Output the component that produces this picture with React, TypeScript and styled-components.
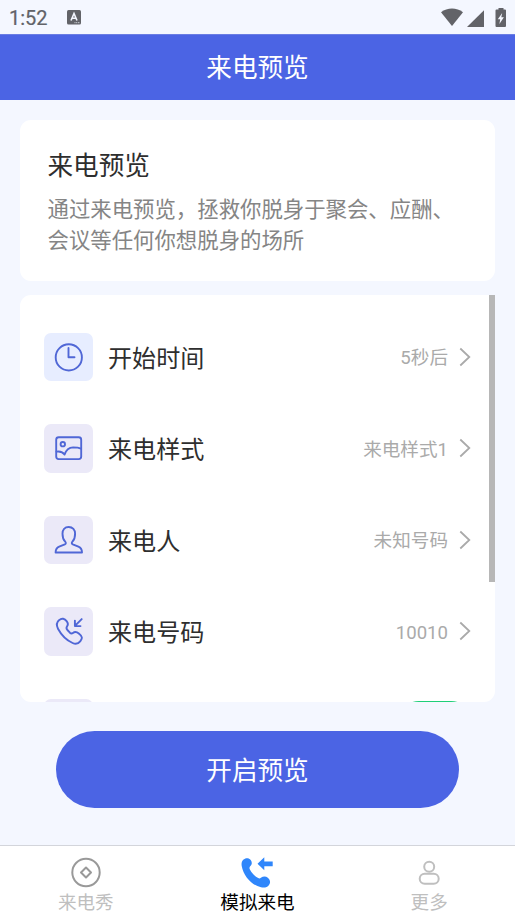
import React from "react";
import styled, { createGlobalStyle } from "styled-components";

const GlobalStyle = createGlobalStyle`
  * { box-sizing: border-box; }
  body { margin: 0; background: #f4f7ff; }
`;

const Screen = styled.div`
  width: 515px;
  height: 915px;
  display: flex;
  flex-direction: column;
  overflow: hidden;
  background: #f4f7ff;
  font-family: Roboto, "Noto Sans CJK SC", sans-serif;
  font-weight: 400;
  white-space: nowrap;
`;

const StatusBar = styled.div`
  height: 34px;
  flex: none;
  display: flex;
  align-items: center;
  padding: 1px 8px 0 9px;
  color: #626368;
`;

const Clock = styled.span`
  width: 58px;
  font-size: 20px;
  line-height: 34px;
  -webkit-text-stroke: 0.2px #626368;
`;

const StatusIcons = styled.div`
  margin-left: auto;
  display: flex;
`;

const Header = styled.header`
  height: 66px;
  flex: none;
  display: flex;
  align-items: center;
  justify-content: center;
  padding-top: 1px;
  background: #4b64e4;
  color: #fff;
  font-size: 25.6px;
  line-height: 38px;
  border-top: 1px solid #6a7de4;
`;

const Content = styled.main`
  flex: 1;
  display: flex;
  flex-direction: column;
  padding: 20px 20px 0;
`;

const IntroCard = styled.section`
  height: 161px;
  padding: 27px 28px 0 27.5px;
  background: #fff;
  border-radius: 11px;
`;

const IntroTitle = styled.h1`
  margin: 0;
  font-size: 25.6px;
  font-weight: 400;
  line-height: 38px;
  color: #2e2e2e;
`;

const IntroText = styled.p`
  margin: 8.5px 0 0;
  font-size: 21.4px;
  line-height: 31.5px;
  color: #858585;
`;

const ListCard = styled.section`
  height: 407px;
  margin-top: 14px;
  display: flex;
  background: #fff;
  border-radius: 11px 0 11px 11px;
  overflow: hidden;
`;

const Rows = styled.div`
  flex: 1;
  padding: 16px 18px 0 24px;
`;

const Row = styled.div`
  height: 91.5px;
  display: flex;
  align-items: center;
`;

const Tile = styled.div<{ $tint?: string }>`
  width: 49px;
  height: 48.5px;
  border-radius: 7px;
  background: ${(p) => p.$tint ?? "#ebe9f8"};
  svg { display: block; }
`;

const Label = styled.span`
  margin-left: 15px;
  padding-top: 4px;
  font-size: 24.1px;
  line-height: 36px;
  color: #2e2e2e;
`;

const Value = styled.span`
  margin-left: auto;
  padding-top: 3px;
  font-size: 18.6px;
  line-height: 28px;
  color: #aaa;
`;

const Chevron = styled.svg`
  margin-left: 11px;
  width: 12px;
  height: 20px;
`;

const Toggle = styled.span`
  width: 76px;
  height: 44.5px;
  margin: 0 -2px 0 auto;
  border-radius: 22px;
  background: #1fcf78;
`;

const ScrollThumb = styled.div`
  width: 6px;
  height: 287px;
  background: #b7b7b7;
`;

const StartButton = styled.button`
  width: 403px;
  height: 77.5px;
  margin: 28.5px auto 0;
  padding: 3px 0 0;
  border: 0;
  border-radius: 39px;
  background: #4b64e4;
  color: #fff;
  font: 400 25.6px/38px Roboto, "Noto Sans CJK SC", sans-serif;
`;

const TabBar = styled.nav`
  height: 70px;
  flex: none;
  display: grid;
  grid-template-columns: repeat(3, 1fr);
  background: #fff;
  border-top: 1px solid #d3d5db;
`;

const Tab = styled.div<{ $active?: boolean }>`
  display: flex;
  flex-direction: column;
  align-items: center;
  gap: 2px;
  padding-top: 9px;
  font-size: 18.6px;
  line-height: 24px;
  color: ${(p) => (p.$active ? "#000" : "#bfbfbf")};
`;

const TileIcon = ({ children }: { children: React.ReactNode }) => (
  <svg width="49" height="49" fill="none" stroke="#5067d6" strokeWidth="1.9" strokeLinecap="round" strokeLinejoin="round">
    {children}
  </svg>
);

const rows = [
  {
    label: "开始时间",
    value: "5秒后",
    tint: "#e7edff",
    icon: (
      <>
        <circle cx="24.8" cy="24.4" r="13.1" />
        <path d="M24.5 15v9.3h6" />
      </>
    ),
  },
  {
    label: "来电样式",
    value: "来电样式1",
    icon: (
      <>
        <rect x="12.2" y="13.3" width="25" height="21.8" rx="2.5" />
        <circle cx="18.8" cy="20.2" r="2.2" />
        <path d="M12.5 27.6c3.500-.5 6.500.5 8 3 1.400-4 4.200-7 8.600-7.200 3 0 5.500.2 8 1.300" />
      </>
    ),
  },
  {
    label: "来电人",
    value: "未知号码",
    icon: (
      <path d="M24.700 11c-4 0-6.200 2.900-6.200 6.700 0 3.500.9 6.200 2.700 8 1 1 .7 2.200-.4 2.700l-5.600 2.300c-2.300 1-3.600 2.800-3.600 5.800h26.400c0-3-1.300-4.800-3.600-5.800l-5.600-2.300c-1.100-.5-1.400-1.700-.4-2.700 1.800-1.800 2.700-4.500 2.700-8 0-3.800-2.400-6.700-6.400-6.700z" />
    ),
  },
  {
    label: "来电号码",
    value: "10010",
    icon: (
      <>
        <path d="M15.200 13.100c2.600-2.400 5.500-1.500 7.600 1.200 1.600 2.200 1.300 3.800.2 5.200-.9 1.200-.5 2.400.4 3.500l2.500 2.700c1 .9 2 1 3 .2 1.900-1.500 4-1.100 5.900.5 3.700 3 3.900 4.900 1.600 7.700-2 2.600-4.700 3.300-7.800 1.900-6.200-2.900-11.300-8.100-14.600-14.300-1.800-3.500-1.700-6.200 1.200-8.600z" />
        <path d="M37.700 12.100l-6.800 6.800M30.900 13.600v5.500h5.600" />
      </>
    ),
  },
];

export default function App() {
  return (
    <>
      <GlobalStyle />
      <Screen>
        <StatusBar>
          <Clock>1:52</Clock>
          <svg width="14" height="15">
            <rect width="14" height="14.5" rx="1.5" fill="#626368" />
            <path d="M4 10.5L7 3.500l3 7M5.200 8.300h3.600" fill="none" stroke="#f4f7ff" strokeWidth="1.6" />
            <path d="M7.500 12.700h5.500" stroke="#f4f7ff" strokeWidth=".8" strokeDasharray="1 .7" />
          </svg>
          <StatusIcons>
            <svg width="66" height="22" fill="#626368">
              <path d="M0 5.300C6.500.3 15.500.3 22 5.300L11 19z" />
              <path d="M43 3.200V20H26z" />
              <path d="M57.500 1h5v1.600h1.500a1 1 0 0 1 1 1V19a1 1 0 0 1-1 1h-8.500a1 1 0 0 1-1-1V3.600a1 1 0 0 1 1-1h2z" />
              <path d="M61.200 6L56.800 12.200h2.400L58.400 17l4.500-6.800h-2.600z" fill="#f4f7ff" />
            </svg>
          </StatusIcons>
        </StatusBar>
        <Header>来电预览</Header>
        <Content>
          <IntroCard>
            <IntroTitle>来电预览</IntroTitle>
            <IntroText>
              通过来电预览，拯救你脱身于聚会、应酬、
              <br />
              会议等任何你想脱身的场所
            </IntroText>
          </IntroCard>
          <ListCard>
            <Rows>
              {rows.map((row) => (
                <Row key={row.label}>
                  <Tile $tint={row.tint}>
                    <TileIcon>{row.icon}</TileIcon>
                  </Tile>
                  <Label>{row.label}</Label>
                  <Value>{row.value}</Value>
                  <Chevron fill="none" stroke="#aaa" strokeWidth="1.8">
                    <path d="M1.300 1.500L10.300 10l-9 8.500" />
                  </Chevron>
                </Row>
              ))}
              <Row>
                <Tile />
                <Toggle />
              </Row>
            </Rows>
            <ScrollThumb />
          </ListCard>
          <StartButton>开启预览</StartButton>
        </Content>
        <TabBar>
          <Tab>
            <svg width="34" height="34" fill="none" stroke="#999" strokeWidth="2">
              <circle cx="17" cy="17.5" r="13.7" />
              <path d="M17 12.500l5 5-5 5-5-5z" strokeLinejoin="round" />
            </svg>
            来电秀
          </Tab>
          <Tab $active>
            <svg width="34" height="34" fill="#2f86fb">
              <path d="M3.200 4.800C5.400 2.600 9 2.700 10.700 5c1.700 2.200 1.300 4.600-.5 6.300-.9.900-.9 1.900-.3 3.100 2.100 3.900 4.800 6.600 8.300 8.600 1 .6 1.800.5 2.700-.2 2.200-1.700 4.900-1.800 6.900-.1 2.500 2.200 3 4.900 1.200 7.300-1.700 2.300-4.500 3-8 2.300C11.500 30.200 3.500 21 1.700 11 1.300 8.500 1.700 6.300 3.200 4.800z" />
              <path d="M17.500 8.800L24.300 2.300v4.100h8.400v4.900h-8.400v4z" />
            </svg>
            模拟来电
          </Tab>
          <Tab>
            <svg width="34" height="34" fill="none" stroke="#bfbfbf" strokeWidth="2">
              <circle cx="17.2" cy="11.7" r="5" />
              <rect x="7.7" y="18.7" width="19" height="10" rx="5" />
            </svg>
            更多
          </Tab>
        </TabBar>
      </Screen>
    </>
  );
}
